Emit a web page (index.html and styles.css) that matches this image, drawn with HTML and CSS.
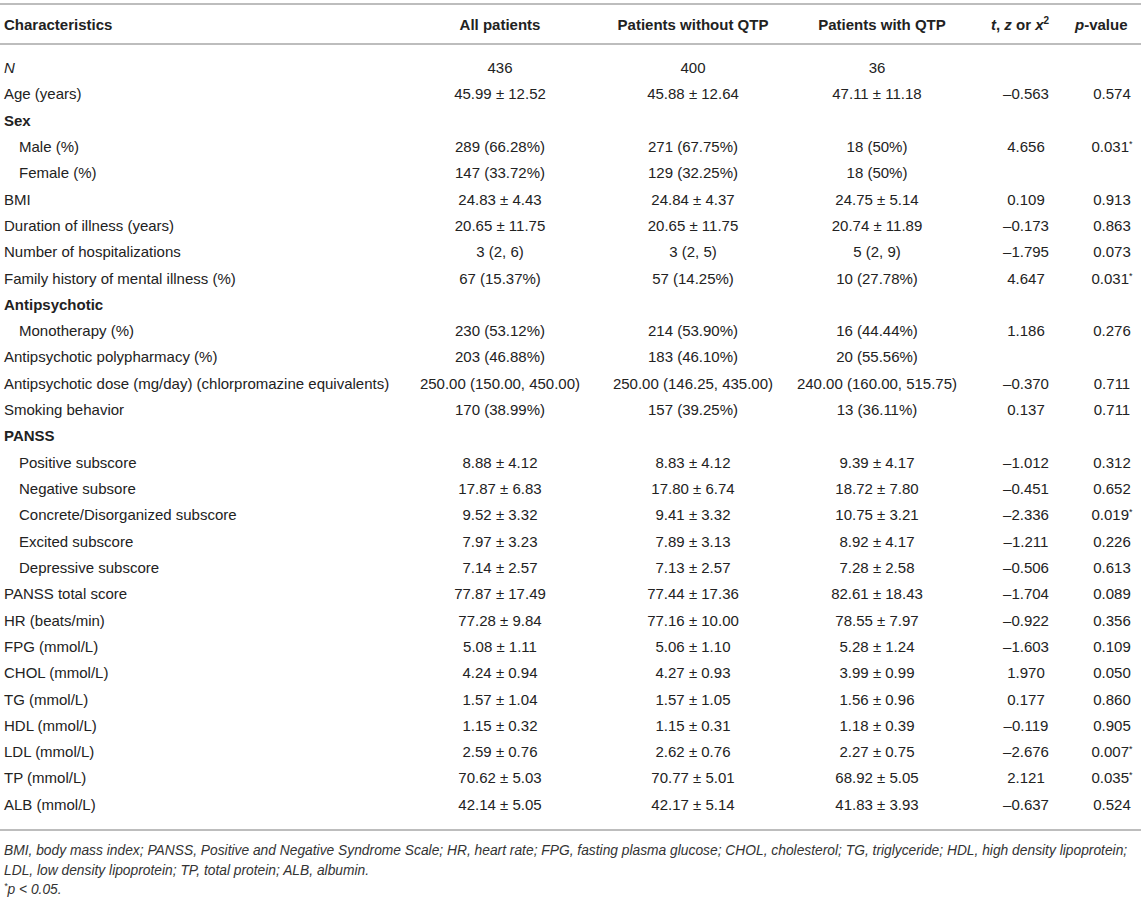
FILE: index.html
```html
<!DOCTYPE html>
<html>
<head>
<meta charset="utf-8">
<link rel="stylesheet" href="styles.css">
</head>
<body>
<div class="wrap">
<table class="tbl">
<colgroup>
<col class="c1"><col class="c2"><col class="c3"><col class="c4"><col class="c5"><col class="c6">
</colgroup>
<thead>
<tr>
<th class="lab">Characteristics</th>
<th>All patients</th>
<th>Patients without QTP</th>
<th class="withq">Patients with QTP</th>
<th class="stat"><i>t</i>, <i>z</i> or <i>x</i><sup>2</sup></th>
<th class="pv"><i>p</i>-value</th>
</tr>
</thead>
<tbody>
<tr class="first"><td class="lab"><i>N</i></td><td>436</td><td>400</td><td>36</td><td></td><td></td></tr>
<tr><td class="lab">Age (years)</td><td>45.99 ± 12.52</td><td>45.88 ± 12.64</td><td>47.11 ± 11.18</td><td>–0.563</td><td>0.574</td></tr>
<tr><td class="lab grp">Sex</td><td></td><td></td><td></td><td></td><td></td></tr>
<tr><td class="lab sub">Male (%)</td><td>289 (66.28%)</td><td>271 (67.75%)</td><td>18 (50%)</td><td>4.656</td><td>0.031<sup class="ast">*</sup></td></tr>
<tr><td class="lab sub">Female (%)</td><td>147 (33.72%)</td><td>129 (32.25%)</td><td>18 (50%)</td><td></td><td></td></tr>
<tr><td class="lab">BMI</td><td>24.83 ± 4.43</td><td>24.84 ± 4.37</td><td>24.75 ± 5.14</td><td>0.109</td><td>0.913</td></tr>
<tr><td class="lab">Duration of illness (years)</td><td>20.65 ± 11.75</td><td>20.65 ± 11.75</td><td>20.74 ± 11.89</td><td>–0.173</td><td>0.863</td></tr>
<tr><td class="lab">Number of hospitalizations</td><td>3 (2, 6)</td><td>3 (2, 5)</td><td>5 (2, 9)</td><td>–1.795</td><td>0.073</td></tr>
<tr><td class="lab">Family history of mental illness (%)</td><td>67 (15.37%)</td><td>57 (14.25%)</td><td>10 (27.78%)</td><td>4.647</td><td>0.031<sup class="ast">*</sup></td></tr>
<tr><td class="lab grp">Antipsychotic</td><td></td><td></td><td></td><td></td><td></td></tr>
<tr><td class="lab sub">Monotherapy (%)</td><td>230 (53.12%)</td><td>214 (53.90%)</td><td>16 (44.44%)</td><td>1.186</td><td>0.276</td></tr>
<tr><td class="lab">Antipsychotic polypharmacy (%)</td><td>203 (46.88%)</td><td>183 (46.10%)</td><td>20 (55.56%)</td><td></td><td></td></tr>
<tr><td class="lab">Antipsychotic dose (mg/day) (chlorpromazine equivalents)</td><td>250.00 (150.00, 450.00)</td><td>250.00 (146.25, 435.00)</td><td>240.00 (160.00, 515.75)</td><td>–0.370</td><td>0.711</td></tr>
<tr><td class="lab">Smoking behavior</td><td>170 (38.99%)</td><td>157 (39.25%)</td><td>13 (36.11%)</td><td>0.137</td><td>0.711</td></tr>
<tr><td class="lab grp">PANSS</td><td></td><td></td><td></td><td></td><td></td></tr>
<tr><td class="lab sub">Positive subscore</td><td>8.88 ± 4.12</td><td>8.83 ± 4.12</td><td>9.39 ± 4.17</td><td>–1.012</td><td>0.312</td></tr>
<tr><td class="lab sub">Negative subsore</td><td>17.87 ± 6.83</td><td>17.80 ± 6.74</td><td>18.72 ± 7.80</td><td>–0.451</td><td>0.652</td></tr>
<tr><td class="lab sub">Concrete/Disorganized subscore</td><td>9.52 ± 3.32</td><td>9.41 ± 3.32</td><td>10.75 ± 3.21</td><td>–2.336</td><td>0.019<sup class="ast">*</sup></td></tr>
<tr><td class="lab sub">Excited subscore</td><td>7.97 ± 3.23</td><td>7.89 ± 3.13</td><td>8.92 ± 4.17</td><td>–1.211</td><td>0.226</td></tr>
<tr><td class="lab sub">Depressive subscore</td><td>7.14 ± 2.57</td><td>7.13 ± 2.57</td><td>7.28 ± 2.58</td><td>–0.506</td><td>0.613</td></tr>
<tr><td class="lab">PANSS total score</td><td>77.87 ± 17.49</td><td>77.44 ± 17.36</td><td>82.61 ± 18.43</td><td>–1.704</td><td>0.089</td></tr>
<tr><td class="lab">HR (beats/min)</td><td>77.28 ± 9.84</td><td>77.16 ± 10.00</td><td>78.55 ± 7.97</td><td>–0.922</td><td>0.356</td></tr>
<tr><td class="lab">FPG (mmol/L)</td><td>5.08 ± 1.11</td><td>5.06 ± 1.10</td><td>5.28 ± 1.24</td><td>–1.603</td><td>0.109</td></tr>
<tr><td class="lab">CHOL (mmol/L)</td><td>4.24 ± 0.94</td><td>4.27 ± 0.93</td><td>3.99 ± 0.99</td><td>1.970</td><td>0.050</td></tr>
<tr><td class="lab">TG (mmol/L)</td><td>1.57 ± 1.04</td><td>1.57 ± 1.05</td><td>1.56 ± 0.96</td><td>0.177</td><td>0.860</td></tr>
<tr><td class="lab">HDL (mmol/L)</td><td>1.15 ± 0.32</td><td>1.15 ± 0.31</td><td>1.18 ± 0.39</td><td>–0.119</td><td>0.905</td></tr>
<tr><td class="lab">LDL (mmol/L)</td><td>2.59 ± 0.76</td><td>2.62 ± 0.76</td><td>2.27 ± 0.75</td><td>–2.676</td><td>0.007<sup class="ast">*</sup></td></tr>
<tr><td class="lab">TP (mmol/L)</td><td>70.62 ± 5.03</td><td>70.77 ± 5.01</td><td>68.92 ± 5.05</td><td>2.121</td><td>0.035<sup class="ast">*</sup></td></tr>
<tr class="last"><td class="lab">ALB (mmol/L)</td><td>42.14 ± 5.05</td><td>42.17 ± 5.14</td><td>41.83 ± 3.93</td><td>–0.637</td><td>0.524</td></tr>
</tbody>
</table>
<div class="notes">
<p class="nw">BMI, body mass index; PANSS, Positive and Negative Syndrome Scale; HR, heart rate; FPG, fasting plasma glucose; CHOL, cholesterol; TG, triglyceride; HDL, high density lipoprotein;</p>
<p>LDL, low density lipoprotein; TP, total protein; ALB, albumin.</p>
<p><sup class="ast">*</sup>p &lt; 0.05.</p>
</div>
</div>
</body>
</html>
```

FILE: styles.css
```css
html, body {
  margin: 0;
  padding: 0;
  background: #ffffff;
}
body {
  font-family: "Liberation Sans", Arial, Helvetica, sans-serif;
  color: #222222;
  font-size: 15px;
}
.wrap {
  width: 1141px;
  padding-top: 3px;
}
.tbl {
  width: 1141px;
  border-collapse: collapse;
  table-layout: fixed;
  border-top: 2px solid #bdbdbd;
  border-bottom: 2px solid #bdbdbd;
}
.c1 { width: 405px; }
.c2 { width: 190px; }
.c3 { width: 196px; }
.c4 { width: 172px; }
.c5 { width: 112px; }
.c6 { width: 66px; }
.tbl th {
  font-weight: bold;
  text-align: center;
  height: 38px;
  padding: 0 2px;
  white-space: nowrap;
  border-bottom: 2px solid #bdbdbd;
  vertical-align: middle;
}
.tbl th.lab { text-align: left; padding-left: 4px; }
.tbl th.withq { padding-left: 12px; }
.tbl th.stat { padding-right: 0; padding-left: 2px; }
.tbl th sup { font-size: 10px; line-height: 0; }
.tbl th.pv { text-align: left; padding-left: 0; }
.tbl td {
  text-align: center;
  padding: 4px 2px;
  line-height: 18.32px;
  white-space: nowrap;
  vertical-align: middle;
}
.tbl td:nth-child(5) { padding-left: 16px; }
.tbl td:nth-child(6) { padding-left: 10px; }
.tbl td.lab { text-align: left; padding-left: 4px; }
.tbl td.sub { padding-left: 19px; }
.tbl td.grp { font-weight: bold; }
.tbl tr.first td { padding-top: 14px; }
.tbl tr.last td { padding-bottom: 15px; }
.ast { font-size: 9px; line-height: 0; vertical-align: 5px; }
.notes {
  padding: 10px 4px 0 4px;
  font-style: italic;
  font-size: 13.8px;
  line-height: 19.5px;
  color: #333333;
}
.notes p { margin: 0; }
.notes p.nw { white-space: nowrap; }
```
